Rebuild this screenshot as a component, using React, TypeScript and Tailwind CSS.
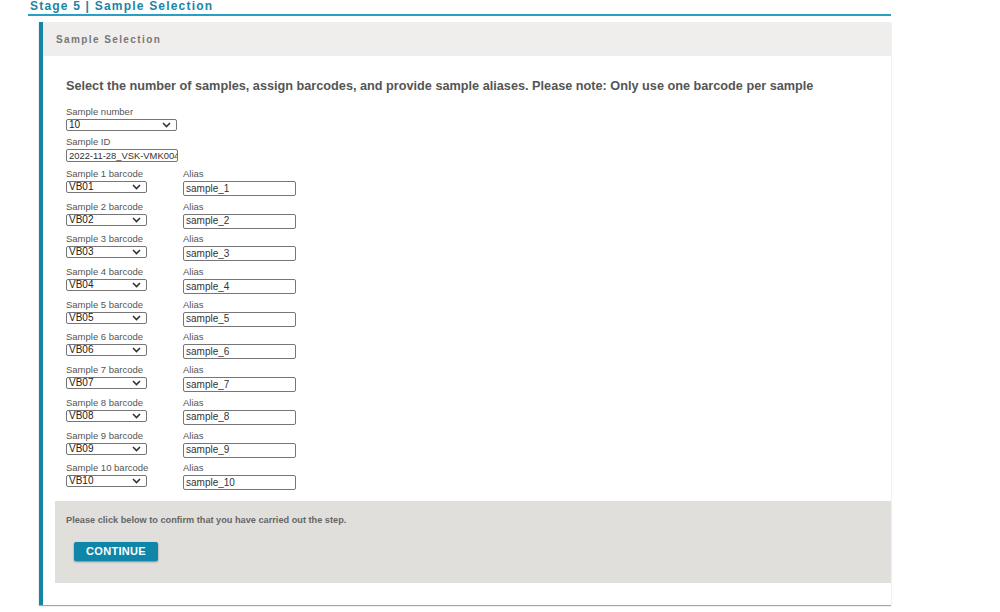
import React, { FC } from 'react'

const font = { fontFamily: '"Liberation Sans", Arial, sans-serif' }

const Chevron: FC = () => (
  <svg width="9" height="6" viewBox="0 0 9 6" className="shrink-0">
    <path d="M1 1 L4.5 4.5 L8 1" fill="none" stroke="#333" strokeWidth="1.6" />
  </svg>
)

const FakeSelect: FC<{ value: string; width: string }> = ({ value, width }) => (
  <div
    className={`${width} h-[12px] border border-[#767676] rounded-[2px] bg-white flex items-center justify-between pl-[2px] pr-[5px] text-[10px] leading-none text-[#222]`}>
    <span>{value}</span>
    <Chevron />
  </div>
)

const FakeInput: FC<{ value: string; width: string; height: string; size?: string }> = ({
  value,
  width,
  height,
  size = 'text-[10px]',
}) => (
  <div
    className={`${width} ${height} ${size} border border-[#767676] rounded-[2px] bg-white flex items-center pl-[2px] leading-none text-[#333] overflow-hidden whitespace-nowrap`}>
    {value}
  </div>
)

const samples = Array.from({ length: 10 }, (_, i) => ({
  n: i + 1,
  code: 'VB' + String(i + 1).padStart(2, '0'),
  alias: 'sample_' + (i + 1),
}))

const App: FC = () => {
  return (
    <div className="w-[1000px] h-[612px] bg-white overflow-hidden" style={font}>
      <div className="ml-[28px] w-[863px]">
        <div className="pl-[2px] h-[14px] text-[12px] leading-[12px] font-bold tracking-[1.2px] text-[#1a85a5]">
          Stage 5 | Sample Selection
        </div>
        <div className="h-[2px] bg-[#2a9fc4]" />
        <div className="mt-[6px] ml-[11px] border-l-[4px] border-[#1386a8] shadow-[0_1px_1px_rgba(0,0,0,0.35)] bg-white">
          <div className="h-[34px] bg-[#efeeec] flex items-center pl-[13px] text-[10px] font-bold tracking-[1.4px] text-[#777]">
            Sample Selection
          </div>
          <div className="pt-[22px] pl-[23px]">
            <div className="h-[16px] leading-[16px] text-[12.7px] font-bold text-[#555]">
              Select the number of samples, assign barcodes, and provide sample aliases. Please note: Only use one
              barcode per sample
            </div>
            <div className="mt-[12px] text-[9.5px] leading-[12px] text-[#555]">Sample number</div>
            <div className="mt-[1px]">
              <FakeSelect value="10" width="w-[111px]" />
            </div>
            <div className="mt-[5px] text-[9.5px] leading-[12px] text-[#555]">Sample ID</div>
            <div className="mt-[1px]">
              <FakeInput value="2022-11-28_VSK-VMK004" width="w-[112px]" height="h-[13px]" size="text-[9.4px]" />
            </div>
            <div className="mt-[6px] flex flex-col">
              {samples.map((s) => (
                <div key={s.n} className="h-[32.7px] flex gap-[36px]">
                  <div className="w-[81px]">
                    <div className="text-[9.5px] leading-[12px] text-[#555] whitespace-nowrap">
                      Sample {s.n} barcode
                    </div>
                    <div className="mt-[1px]">
                      <FakeSelect value={s.code} width="w-[81px]" />
                    </div>
                  </div>
                  <div>
                    <div className="text-[9.5px] leading-[12px] text-[#555]">Alias</div>
                    <div className="mt-[1px]">
                      <FakeInput value={s.alias} width="w-[113px]" height="h-[15px]" />
                    </div>
                  </div>
                </div>
              ))}
            </div>
          </div>
          <div className="pl-[12px] pt-[6px] pb-[22px]">
            <div className="bg-[#e0dfdc] pt-[13px] pb-[22px] pl-[11px]">
              <div className="text-[9.2px] leading-[12px] font-bold text-[#666]">
                Please click below to confirm that you have carried out the step.
              </div>
              <button className="mt-[16px] ml-[8px] w-[84px] h-[19px] bg-[#0f86a8] rounded-[2px] shadow-[0_1px_2px_rgba(0,0,0,0.4)] text-white text-[11px] font-bold tracking-[0.3px] flex items-center justify-center">
                CONTINUE
              </button>
            </div>
          </div>
        </div>
      </div>
    </div>
  )
}

export default App
